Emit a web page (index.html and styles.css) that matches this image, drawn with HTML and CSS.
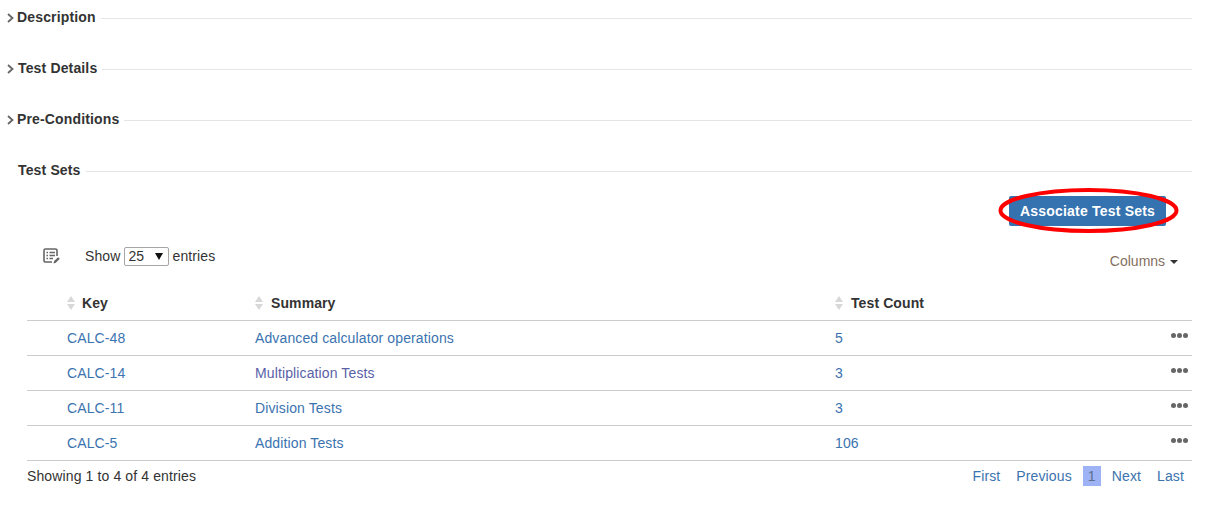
FILE: index.html
```html
<!DOCTYPE html>
<html lang="en">
<head>
<meta charset="utf-8">
<title>Test Sets</title>
<link rel="stylesheet" href="styles.css">
</head>
<body>
<main class="page">
  <section class="sec">
    <svg class="chev" width="7" height="10" viewBox="0 0 7 10"><path d="M1 1l4.500 4-4.500 4" fill="none" stroke="#666" stroke-width="1.800"/></svg>
    <h2 class="sec-title">Description</h2><span class="sec-line"></span>
  </section>
  <section class="sec">
    <svg class="chev" width="7" height="10" viewBox="0 0 7 10"><path d="M1 1l4.500 4-4.500 4" fill="none" stroke="#666" stroke-width="1.800"/></svg>
    <h2 class="sec-title gap-t">Test Details</h2><span class="sec-line"></span>
  </section>
  <section class="sec">
    <svg class="chev" width="7" height="10" viewBox="0 0 7 10"><path d="M1 1l4.500 4-4.500 4" fill="none" stroke="#666" stroke-width="1.800"/></svg>
    <h2 class="sec-title">Pre-Conditions</h2><span class="sec-line"></span>
  </section>
  <section class="sec no-chev">
    <h2 class="sec-title">Test Sets</h2><span class="sec-line"></span>
  </section>

  <div class="actions">
    <div class="btn-wrap">
      <button class="btn">Associate Test Sets</button>
      <svg class="ring" width="182" height="46" viewBox="0 0 182 46"><ellipse cx="90.500" cy="22.500" rx="88" ry="20.500" fill="none" stroke="#f00" stroke-width="4"/></svg>
    </div>
  </div>

  <div class="tools">
    <svg class="list-icon" width="17" height="16" viewBox="0 0 17 16"><path d="M14 8V2.500A1.500 1.500 0 0 0 12.500 1h-10A1.500 1.500 0 0 0 1 2.500v10A1.500 1.500 0 0 0 2.500 14H9" fill="none" stroke="#666" stroke-width="1.600"/><path d="M3.500 4.500h1.500M6.500 4.500h5.500M3.500 7.500h1.500M6.500 7.500h5.500M3.500 10.500h1.500M6.500 10.500h3.500" stroke="#666" stroke-width="1.300"/><path d="M10.500 15.500l.6-2.500 4-3.800 1.700 1.600-4 3.900z" fill="#666"/></svg>
    <label class="length">Show
      <span class="select-wrap"><select class="length-select"><option>25</option></select></span>
      entries</label>
    <a class="columns">Columns <span class="caret"></span></a>
  </div>

  <table class="grid">
    <colgroup><col class="c-key"><col class="c-sum"><col class="c-count"><col class="c-act"></colgroup>
    <thead>
      <tr>
        <th><span class="sort"></span>Key</th>
        <th><span class="sort"></span>Summary</th>
        <th><span class="sort"></span>Test Count</th>
        <th></th>
      </tr>
    </thead>
    <tbody>
      <tr><td><a>CALC-48</a></td><td><a>Advanced calculator operations</a></td><td><a>5</a></td><td class="dots"><i></i><i></i><i></i></td></tr>
      <tr><td><a>CALC-14</a></td><td><a class="visited">Multiplication Tests</a></td><td><a>3</a></td><td class="dots"><i></i><i></i><i></i></td></tr>
      <tr><td><a>CALC-11</a></td><td><a>Division Tests</a></td><td><a>3</a></td><td class="dots"><i></i><i></i><i></i></td></tr>
      <tr><td><a>CALC-5</a></td><td><a>Addition Tests</a></td><td><a>106</a></td><td class="dots"><i></i><i></i><i></i></td></tr>
    </tbody>
  </table>

  <div class="foot">
    <span>Showing 1 to 4 of 4 entries</span>
    <nav class="pager"><a>First</a><a>Previous</a><a class="cur">1</a><a>Next</a><a>Last</a></nav>
  </div>
</main>
</body>
</html>
```

FILE: styles.css
```css
* { box-sizing: border-box; }
html, body { margin: 0; padding: 0; }
body {
  background: #fff;
  color: #333;
  font: 14px/20px "Liberation Sans", Arial, sans-serif;
  letter-spacing: 0.12px;
}
.page { padding: 0 20px 0 0; height: 515px; overflow: hidden; }

.sec {
  display: flex;
  align-items: center;
  height: 51px;
  padding: 0 0 15px 7px;
}
.sec .chev { flex: none; margin-right: 3px; margin-bottom: 1px; }
.no-chev { padding-left: 18px; }
.sec-title {
  margin: 0;
  padding-bottom: 2px;
  font-size: 14px;
  font-weight: bold;
  letter-spacing: 0.15px;
  color: #333;
  white-space: nowrap;
}
.gap-t { margin-left: 1px; }
.sec-line { flex: 1; height: 1px; background: #e5e5e5; margin-left: 5px; }

.actions {
  display: flex;
  justify-content: flex-end;
  padding-right: 26px;
  margin-top: -8px;
}
.btn-wrap { position: relative; }
.btn {
  display: block;
  width: 157px;
  height: 30px;
  margin: 0;
  padding: 0;
  border: 0;
  border-radius: 2px;
  background: #3572b0;
  color: #fff;
  font: bold 14px/20px "Liberation Sans", Arial, sans-serif;
  letter-spacing: 0.2px;
}
.ring { position: absolute; left: -11px; top: -8px; pointer-events: none; }

.tools {
  display: flex;
  align-items: center;
  height: 30px;
  margin-top: 15px;
  padding-left: 43px;
}
.list-icon { flex: none; margin-right: 25px; }
.length { display: flex; align-items: center; gap: 4px; }
.select-wrap { position: relative; display: block; height: 19px; margin-left: -1px; }
.select-wrap::after {
  content: "";
  position: absolute;
  right: 6px;
  top: 6px;
  border-top: 7px solid #111;
  border-left: 4px solid transparent;
  border-right: 4px solid transparent;
  pointer-events: none;
}
.length-select {
  appearance: none;
  display: block;
  width: 45px;
  height: 19px;
  padding: 0 0 0 4px;
  border: 1px solid #a6a6a6;
  border-radius: 2px;
  background: #fff;
  color: #333;
  font: 14px "Liberation Sans", Arial, sans-serif;
}
.columns { margin-left: auto; margin-right: 14px; margin-top: 10px; color: #85705f; letter-spacing: 0; }
.caret {
  display: inline-block;
  width: 0;
  height: 0;
  margin-left: 1px;
  vertical-align: middle;
  border-top: 4px solid #333;
  border-left: 4px solid transparent;
  border-right: 4px solid transparent;
}

.grid {
  width: 1165px;
  margin: 20px 0 0 27px;
  border-collapse: collapse;
  table-layout: fixed;
}
.c-key { width: 228px; }
.c-sum { width: 580px; }
.c-count { width: 330px; }
.c-act { width: 27px; }
.grid th {
  height: 29px;
  padding: 0 0 5px 40px;
  text-align: left;
  font-weight: bold;
  letter-spacing: 0.1px;
  border-bottom: 1px solid #ccc;
}
.grid th:nth-child(n+2) { padding-left: 0; }
.grid th:nth-child(n+2) .sort { margin-right: 7px; }
.grid td {
  height: 35px;
  padding: 0 0 0 40px;
  border-bottom: 1px solid #ccc;
}
.grid td:nth-child(n+2) { padding-left: 0; }
.sort {
  display: inline-block;
  position: relative;
  width: 9px;
  height: 14px;
  margin-right: 6px;
  vertical-align: -2px;
}
.sort::before, .sort::after {
  content: "";
  position: absolute;
  left: 0;
  border-left: 4.500px solid transparent;
  border-right: 4.500px solid transparent;
}
.sort::before { top: 0; border-bottom: 6px solid #d8d8d8; }
.sort::after { bottom: 0; border-top: 6px solid #d8d8d8; }
a { color: #3b73af; }
a.visited { color: #5a5fa8; }
.grid td.dots { padding: 7px 4px 0 0; text-align: right; white-space: nowrap; font-size: 0; vertical-align: top; }
.dots i {
  display: inline-block;
  width: 5px;
  height: 5px;
  margin-left: 1px;
  border-radius: 50%;
  background: #666;
}

.foot {
  display: flex;
  justify-content: space-between;
  align-items: center;
  margin: 4px 0 0 27px;
  height: 22px;
}
.pager { display: flex; align-items: center; gap: 16px; }
.pager a { line-height: 20px; }
.pager a:last-child { margin-right: 8px; }
.pager .cur {
  width: 18px;
  margin: 0 -5px;
  text-align: center;
  background: #9db3f5;
  color: #5e6e8c;
}
```
